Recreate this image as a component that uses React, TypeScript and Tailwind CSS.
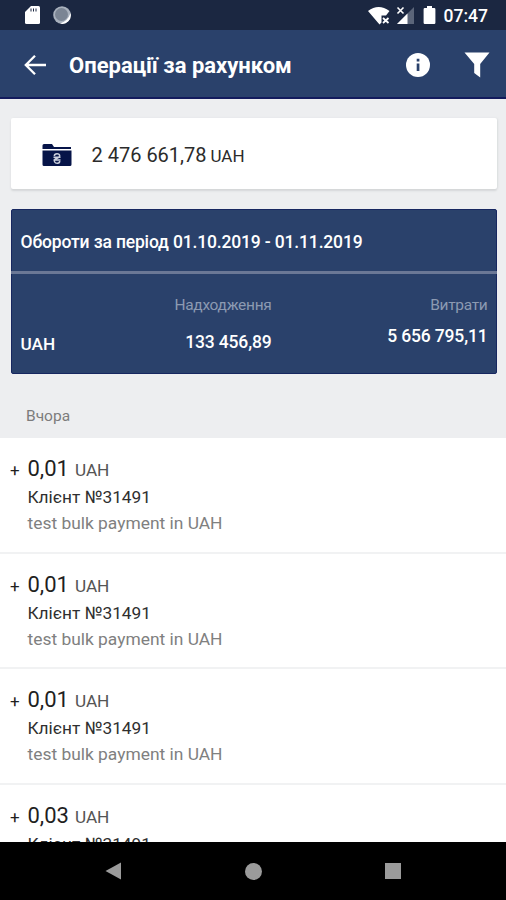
interface Operation {
  amount: string
  client: string
  note: string
}

const operations: Operation[] = [
  { amount: '0,01', client: 'Клієнт №31491', note: 'test bulk payment in UAH' },
  { amount: '0,01', client: 'Клієнт №31491', note: 'test bulk payment in UAH' },
  { amount: '0,01', client: 'Клієнт №31491', note: 'test bulk payment in UAH' },
  { amount: '0,03', client: 'Клієнт №31491', note: 'test bulk payment in UAH' },
]

function StatusBar() {
  return (
    <div className="flex h-[30px] shrink-0 items-center bg-[#1b2741] pr-[18px] pl-6 text-white">
      <svg width="17" height="20" viewBox="0 0 17 20">
        <path d="M1 7 7 1h7.500a1.500 1.500 0 0 1 1.500 1.500v15a1.500 1.500 0 0 1-1.500 1.500h-12A1.500 1.500 0 0 1 1 17.500z" fill="#fff" />
        <path d="M7 3.500v3M9.500 3.500v3M12 3.500v3" stroke="#1b2741" strokeWidth="1" />
      </svg>
      <svg className="ml-3" width="18" height="18" viewBox="0 0 18 18">
        <circle cx="9" cy="9" r="8.800" fill="#a9b1bd" />
        <path d="M17.500 7A8.500 8.500 0 0 1 7 17.500Q15 15 17.500 7z" fill="#fff" />
        <circle cx="8.500" cy="8.500" r="6.500" fill="#7b8594" />
      </svg>
      <div className="ml-auto flex items-center">
        {/* wi-fi without internet */}
        <svg width="24" height="19" viewBox="0 0 24 19">
          <path d="M0 5Q10.500 -3 21.500 5l-3.500 4.500H13.500v7L11.500 18.500z" fill="#fff" />
          <path d="m15 12 5.500 5m0-5-5.500 5" stroke="#fff" strokeWidth="1.800" />
        </svg>
        {/* mobile network without data */}
        <svg className="ml-[4px]" width="19" height="19" viewBox="0 0 19 19">
          <path d="M18 1v17H1z" fill="#5b6579" />
          <path d="M11.500 7.500V18H1z" fill="#fff" />
          <path d="m1.500 1.500 6 6m0-6-6 6" stroke="#fff" strokeWidth="1.600" />
        </svg>
        <svg className="ml-[8px]" width="13" height="20" viewBox="0 0 13 20">
          <path d="M4 1h5v2h2.200a1.200 1.200 0 0 1 1.200 1.200v13.600a1.200 1.200 0 0 1-1.200 1.200H1.800a1.200 1.200 0 0 1-1.200-1.200V4.200A1.200 1.200 0 0 1 1.800 3H4z" fill="#fff" />
        </svg>
        <span className="ml-[8px] pt-[2px] text-[17.500px] leading-[28px] font-medium">07:47</span>
      </div>
    </div>
  )
}

function Header() {
  return (
    <header className="flex h-[69px] shrink-0 items-center border-b-2 border-[#131b5d] bg-[#2a416b] pt-[2px] pr-[16px] pl-[23px] text-white">
      <svg width="24" height="22" viewBox="0 0 24 22" fill="none" stroke="#fff" strokeWidth="2.300">
        <path d="M23 11H3M12 1.800 2.800 11l9.200 9.200" />
      </svg>
      <h1 className="ml-[22px] pt-[2px] text-[22px] leading-7 font-bold whitespace-nowrap">Операції за рахунком</h1>
      <svg className="ml-auto" width="24" height="24" viewBox="0 0 24 24">
        <circle cx="12" cy="12" r="12" fill="#fff" />
        <path d="M10.700 5.800h2.700v2.700h-2.700zM10.700 10.500h2.700v7.500h-2.700z" fill="#2a416b" />
      </svg>
      <svg className="ml-[34px]" width="26" height="26" viewBox="0 0 26 26">
        <path d="M0.500 0.500h25L16.200 12v13.500l-6-4.500V12z" fill="#fff" />
      </svg>
    </header>
  )
}

function BalanceCard() {
  return (
    <section className="flex h-[71px] shrink-0 items-center rounded-xs bg-white pt-[2px] pl-[31px] shadow-[0_2px_2px_#d5d7d9,1px_0_2px_#dfe1e3]">
      <svg width="30" height="24" viewBox="0 0 30 24">
        <path d="M0.500 2.500a1.500 1.500 0 0 1 1.500-1.500h8l2 3h17v2H0.500zM0.500 7.500h29V21.500a1.500 1.500 0 0 1-1.500 1.500H2A1.500 1.500 0 0 1 0.500 21.500z" fill="#061448" />
        <path d="M12.300 13q.2-2.200 2.700-2.200t2.700 2q0 1.500-2 2.200l-2 .8q-2 .8-1 3.200.8 1.500 2.800 1.300 2.300-.2 2.200-2.300M11.500 14.200h7M11.500 16.900h7" fill="none" stroke="#cbd0dd" strokeWidth="1.500" />
      </svg>
      <p className="ml-[20px] pt-[2px] text-[20px] leading-6 text-[#2b2b2b]">
        2 476 661,78 <span className="-ml-px text-[17px]">UAH</span>
      </p>
    </section>
  )
}

function TurnoverCard() {
  return (
    <section className="mt-5 flex h-[165px] shrink-0 flex-col rounded-xs border border-[#172760] bg-[#2a416b] text-white">
      <h2 className="h-[61px] pl-[9px] text-[17.500px] leading-[64px] font-medium tracking-[-0.16px] whitespace-nowrap">
        Обороти за період 01.10.2019 - 01.11.2019
      </h2>
      <div className="-mx-px h-[3px] bg-[#6b7896]" />
      <div className="flex flex-1 pr-[8px] pl-[9px]">
        <div className="w-[100px] pt-[58px] text-[17.200px] leading-6 font-medium">UAH</div>
        <div className="w-[151px] pt-[19px] text-right">
          <p className="text-[15.500px] leading-6 tracking-[-0.3px] text-[#8c9ab2]">Надходження</p>
          <p className="mt-[13px] text-[17.500px] leading-6 font-medium tracking-[-0.15px]">133 456,89</p>
        </div>
        <div className="flex-1 pt-[19px] text-right">
          <p className="text-[15.500px] leading-6 tracking-[-0.3px] text-[#8c9ab2]">Витрати</p>
          <p className="mt-[7px] text-[17.500px] leading-6 font-medium tracking-[-0.15px]">5 656 795,11</p>
        </div>
      </div>
    </section>
  )
}

function OperationRow({ operation }: { operation: Operation }) {
  return (
    <li className="h-[115.500px] border-b-2 border-[#f1f2f3] pt-[17px] pl-[10px]">
      <p className="flex items-baseline text-[22px] leading-7 text-[#1f1f1f]">
        <span className="w-[17.500px] text-[17px]">+</span>
        {operation.amount}
        <span className="ml-[6px] text-[17.200px] text-[#555]">UAH</span>
      </p>
      <p className="pl-[17.500px] text-[17.300px] leading-[26px] text-[#2f2f2f]">{operation.client}</p>
      <p className="pl-[17.500px] text-[17.400px] leading-[26px] text-[#808080]">{operation.note}</p>
    </li>
  )
}

function NavigationBar() {
  return (
    <nav className="flex h-[58px] shrink-0 items-center justify-between bg-black px-[105px]">
      <svg width="16" height="18" viewBox="0 0 16 18">
        <path d="M16 0.500v17L0.500 9z" fill="#9b9b9b" />
      </svg>
      <div className="h-[17px] w-[17px] rounded-full bg-[#9b9b9b]" />
      <div className="h-4 w-4 bg-[#9b9b9b]" />
    </nav>
  )
}

export default function App() {
  return (
    <div className="flex h-[900px] w-[506px] flex-col overflow-hidden bg-[#edeef0] font-[Roboto,sans-serif]">
      <StatusBar />
      <Header />
      <main className="flex min-h-0 flex-1 flex-col overflow-hidden">
        <div className="flex shrink-0 flex-col pt-[19px] pr-[9.500px] pl-[10.500px]">
          <BalanceCard />
          <TurnoverCard />
        </div>
        <h3 className="h-[64px] shrink-0 pl-[26px] text-[15.500px] leading-[85px] text-[#7c7c7c]">Вчора</h3>
        <ul className="shrink-0 bg-white">
          {operations.map((operation, index) => (
            <OperationRow key={index} operation={operation} />
          ))}
        </ul>
      </main>
      <NavigationBar />
    </div>
  )
}
